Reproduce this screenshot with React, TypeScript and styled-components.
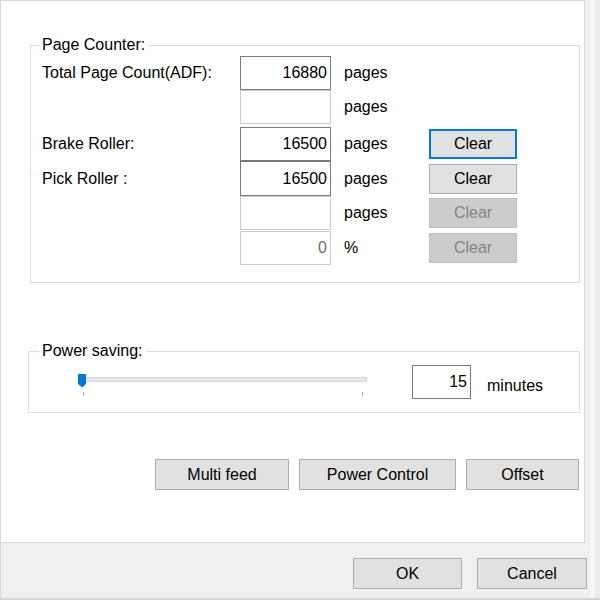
import React from "react";
import styled, { createGlobalStyle, css } from "styled-components";

const GlobalStyle = createGlobalStyle`
  html, body {
    margin: 0;
    padding: 0;
    background: #f0f0f0;
  }
  body {
    font-family: "Liberation Sans", Arial, sans-serif;
    font-size: 16px;
    color: #000;
  }
  * {
    box-sizing: border-box;
  }
`;

type ButtonState = "normal" | "focused" | "disabled";

interface CounterItem {
  label: string;
  value: string;
  unit: string;
  active: boolean;
  button?: ButtonState;
  height: number;
  top: number;
}

const counters: CounterItem[] = [
  { label: "Total Page Count(ADF):", value: "16880", unit: "pages", active: true, height: 34, top: 0 },
  { label: "", value: "", unit: "pages", active: false, height: 34, top: 0 },
  { label: "Brake Roller:", value: "16500", unit: "pages", active: true, button: "focused", height: 34, top: 3 },
  { label: "Pick Roller :", value: "16500", unit: "pages", active: true, button: "normal", height: 35, top: 0 },
  { label: "", value: "", unit: "pages", active: false, button: "disabled", height: 34, top: 0 },
  { label: "", value: "0", unit: "%", active: false, button: "disabled", height: 34, top: 1 },
];

const Slider = () => (
  <SliderSvg width="294" height="34" viewBox="0 0 294 34">
    <rect x="6.5" y="12.5" width="284" height="4" fill="#e7e7e7" stroke="#d6d6d6" />
    <polygon points="2,9 10,9 10,19 6,22.5 2,19" fill="#0078d7" />
    <line x1="7.5" y1="27" x2="7.5" y2="31" stroke="#a8a8a8" />
    <line x1="286.5" y1="27" x2="286.5" y2="31" stroke="#a8a8a8" />
  </SliderSvg>
);

const App = () => (
  <>
    <GlobalStyle />
    <Window>
      <TabPage>
        <CounterGroup>
          <Legend>Page Counter:</Legend>
          <CounterList>
            {counters.map((c, i) => (
              <CounterRow key={i} $height={c.height} $top={c.top}>
                <RowLabel>{c.label}</RowLabel>
                <TextBox $active={c.active} readOnly value={c.value} />
                <Unit>{c.unit}</Unit>
                {c.button && (
                  <WinButton $width={88} $height={30} $state={c.button} disabled={c.button === "disabled"}>
                    Clear
                  </WinButton>
                )}
              </CounterRow>
            ))}
          </CounterList>
        </CounterGroup>

        <PowerGroup>
          <Legend>Power saving:</Legend>
          <PowerRow>
            <Slider />
            <MinutesBox readOnly value="15" />
            <MinutesLabel>minutes</MinutesLabel>
          </PowerRow>
        </PowerGroup>

        <ActionRow>
          <WinButton $width={134} $height={31}>Multi feed</WinButton>
          <WinButton $width={157} $height={31}>Power Control</WinButton>
          <WinButton $width={113} $height={31}>Offset</WinButton>
        </ActionRow>
      </TabPage>

      <Footer>
        <WinButton $width={109} $height={31}>OK</WinButton>
        <WinButton $width={110} $height={31}>Cancel</WinButton>
      </Footer>
    </Window>
  </>
);

export default App;

const Window = styled.div`
  width: 600px;
  height: 600px;
  display: flex;
  flex-direction: column;
  background-color: #f0f0f0;
  background-image: linear-gradient(
    to right,
    transparent 590px,
    #f7f7f7 590px,
    #f7f7f7 595px,
    #ebebeb 595px
  );
  border-bottom: 2px solid #d4d4d4;
  overflow: hidden;
`;

const TabPage = styled.div`
  width: 585px;
  height: 543px;
  flex-shrink: 0;
  display: flex;
  flex-direction: column;
  background: #fff;
  border: 1px solid #d9d9d9;
  padding: 35px 4px 0 29px;
`;

const groupBox = css`
  margin: 0;
  border: 1px solid #dcdcdc;
  min-width: 0;
`;

const CounterGroup = styled.fieldset`
  ${groupBox};
  padding: 0 0 17px 8px;
`;

const PowerGroup = styled.fieldset`
  ${groupBox};
  margin: 59px 0 0 -2px;
  padding: 0 0 13px 10px;
`;

const Legend = styled.legend`
  padding: 0 3px;
  line-height: 18px;
  font-size: 16px;
`;

const CounterList = styled.div`
  display: flex;
  flex-direction: column;
  padding: 2px 0 0 3px;
`;

const CounterRow = styled.div<{ $height: number; $top: number }>`
  display: grid;
  grid-template-columns: 198px 91px 98px 88px;
  align-items: center;
  height: ${({ $height }) => $height}px;
  margin-top: ${({ $top }) => $top}px;
`;

const RowLabel = styled.span`
  white-space: nowrap;
`;

const TextBox = styled.input<{ $active: boolean }>`
  width: 91px;
  height: 100%;
  margin: 0;
  padding: 0 3px 0 0;
  font: inherit;
  text-align: right;
  outline: none;
  background: #fff;
  border: 1px solid ${({ $active }) => ($active ? "#7a7a7a" : "#cccccc")};
  color: ${({ $active }) => ($active ? "#000" : "#6d6d6d")};
`;

const Unit = styled.span`
  padding-left: 13px;
  white-space: nowrap;
`;

const WinButton = styled.button<{ $width: number; $height: number; $state?: ButtonState }>`
  width: ${({ $width }) => $width}px;
  height: ${({ $height }) => $height}px;
  margin: 0;
  padding: 0;
  font: inherit;
  color: #000;
  background: #e1e1e1;
  border: 1px solid #adadad;
  ${({ $state }) =>
    $state === "focused" &&
    css`
      border: 2px solid #0078d7;
    `}
  ${({ $state }) =>
    $state === "disabled" &&
    css`
      background: #cccccc;
      border-color: #bfbfbf;
      color: #838383;
    `}
`;

const PowerRow = styled.div`
  display: flex;
  align-items: flex-start;
  padding: 5px 0 0 37px;
`;

const SliderSvg = styled.svg`
  display: block;
  flex-shrink: 0;
`;

const MinutesBox = styled.input`
  width: 59px;
  height: 34px;
  margin: 0 0 0 42px;
  padding: 0 3px 0 0;
  font: inherit;
  text-align: right;
  outline: none;
  background: #fff;
  border: 1px solid #7a7a7a;
`;

const MinutesLabel = styled.span`
  padding: 12px 0 0 16px;
  white-space: nowrap;
`;

const ActionRow = styled.div`
  display: flex;
  justify-content: flex-end;
  gap: 10px;
  margin-top: 46px;
  padding-right: 1px;
`;

const Footer = styled.div`
  flex: 1;
  display: flex;
  justify-content: flex-end;
  gap: 15px;
  padding: 15px 13px 0 0;
  border-left: 1px solid #d9d9d9;
`;
